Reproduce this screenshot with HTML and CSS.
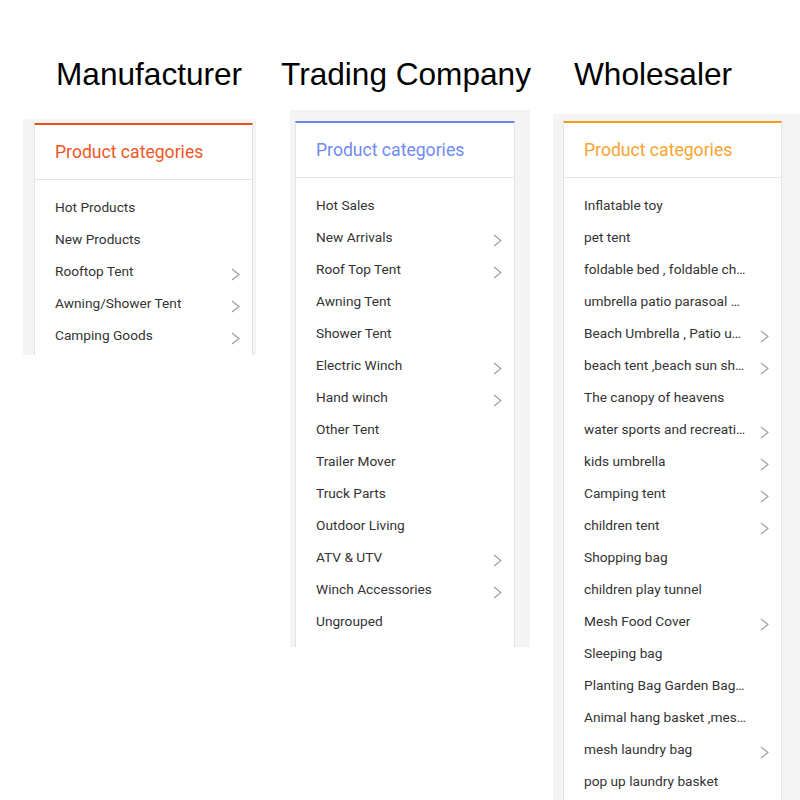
FILE: index.html
```html
<!DOCTYPE html>
<html>
<head>
<meta charset="utf-8">
<link rel="stylesheet" href="styles.css">
</head>
<body>
<div class="titles">
  <h1 class="title">Manufacturer</h1>
  <h1 class="title">Trading Company</h1>
  <h1 class="title">Wholesaler</h1>
</div>
<div class="columns">
  <div class="col col-1">
    <div class="card card-red">
      <div class="card-head">Product categories</div>
      <ul class="list">
        <li class="item"><span class="label">Hot Products</span></li>
        <li class="item"><span class="label">New Products</span></li>
        <li class="item"><span class="label">Rooftop Tent</span><svg class="chev" viewBox="0 0 9 13"><polyline points="1,1 8,6.5 1,12"/></svg></li>
        <li class="item"><span class="label">Awning/Shower Tent</span><svg class="chev" viewBox="0 0 9 13"><polyline points="1,1 8,6.5 1,12"/></svg></li>
        <li class="item"><span class="label">Camping Goods</span><svg class="chev" viewBox="0 0 9 13"><polyline points="1,1 8,6.5 1,12"/></svg></li>
      </ul>
    </div>
  </div>
  <div class="col col-2">
    <div class="card card-blue">
      <div class="card-head">Product categories</div>
      <ul class="list">
        <li class="item"><span class="label">Hot Sales</span></li>
        <li class="item"><span class="label">New Arrivals</span><svg class="chev" viewBox="0 0 9 13"><polyline points="1,1 8,6.5 1,12"/></svg></li>
        <li class="item"><span class="label">Roof Top Tent</span><svg class="chev" viewBox="0 0 9 13"><polyline points="1,1 8,6.5 1,12"/></svg></li>
        <li class="item"><span class="label">Awning Tent</span></li>
        <li class="item"><span class="label">Shower Tent</span></li>
        <li class="item"><span class="label">Electric Winch</span><svg class="chev" viewBox="0 0 9 13"><polyline points="1,1 8,6.5 1,12"/></svg></li>
        <li class="item"><span class="label">Hand winch</span><svg class="chev" viewBox="0 0 9 13"><polyline points="1,1 8,6.5 1,12"/></svg></li>
        <li class="item"><span class="label">Other Tent</span></li>
        <li class="item"><span class="label">Trailer Mover</span></li>
        <li class="item"><span class="label">Truck Parts</span></li>
        <li class="item"><span class="label">Outdoor Living</span></li>
        <li class="item"><span class="label">ATV &amp; UTV</span><svg class="chev" viewBox="0 0 9 13"><polyline points="1,1 8,6.5 1,12"/></svg></li>
        <li class="item"><span class="label">Winch Accessories</span><svg class="chev" viewBox="0 0 9 13"><polyline points="1,1 8,6.5 1,12"/></svg></li>
        <li class="item"><span class="label">Ungrouped</span></li>
      </ul>
    </div>
  </div>
  <div class="col col-3">
    <div class="card card-amber">
      <div class="card-head">Product categories</div>
      <ul class="list">
        <li class="item"><span class="label">Inflatable toy</span></li>
        <li class="item"><span class="label">pet tent</span></li>
        <li class="item"><span class="label">foldable bed , foldable chair</span></li>
        <li class="item"><span class="label">umbrella patio parasoal umbrella</span></li>
        <li class="item"><span class="label">Beach Umbrella , Patio umbrella</span><svg class="chev" viewBox="0 0 9 13"><polyline points="1,1 8,6.5 1,12"/></svg></li>
        <li class="item"><span class="label">beach tent ,beach sun shelter</span><svg class="chev" viewBox="0 0 9 13"><polyline points="1,1 8,6.5 1,12"/></svg></li>
        <li class="item"><span class="label">The canopy of heavens</span></li>
        <li class="item"><span class="label">water sports and recreation</span><svg class="chev" viewBox="0 0 9 13"><polyline points="1,1 8,6.5 1,12"/></svg></li>
        <li class="item"><span class="label">kids umbrella</span><svg class="chev" viewBox="0 0 9 13"><polyline points="1,1 8,6.5 1,12"/></svg></li>
        <li class="item"><span class="label">Camping tent</span><svg class="chev" viewBox="0 0 9 13"><polyline points="1,1 8,6.5 1,12"/></svg></li>
        <li class="item"><span class="label">children tent</span><svg class="chev" viewBox="0 0 9 13"><polyline points="1,1 8,6.5 1,12"/></svg></li>
        <li class="item"><span class="label">Shopping bag</span></li>
        <li class="item"><span class="label">children play tunnel</span></li>
        <li class="item"><span class="label">Mesh Food Cover</span><svg class="chev" viewBox="0 0 9 13"><polyline points="1,1 8,6.5 1,12"/></svg></li>
        <li class="item"><span class="label">Sleeping bag</span></li>
        <li class="item"><span class="label">Planting Bag Garden Bags , Grow Bags</span></li>
        <li class="item"><span class="label">Animal hang basket ,mesh basket</span></li>
        <li class="item"><span class="label">mesh laundry bag</span><svg class="chev" viewBox="0 0 9 13"><polyline points="1,1 8,6.5 1,12"/></svg></li>
        <li class="item"><span class="label">pop up laundry basket</span></li>
      </ul>
    </div>
  </div>
</div>
</body>
</html>
```

FILE: styles.css
```css
html, body {
  margin: 0;
  padding: 0;
  background: #ffffff;
}

body {
  width: 800px;
  height: 800px;
  overflow: hidden;
}

.titles {
  display: grid;
  grid-template-columns: 225px 293px auto;
  padding: 56px 0 0 56px;
  height: 36px;
}

.title {
  margin: 0;
  font-family: "Liberation Sans", Arial, sans-serif;
  font-weight: normal;
  font-size: 31.6px;
  line-height: 36px;
  color: #000;
  white-space: nowrap;
}

.columns {
  display: flex;
  align-items: flex-start;
  padding: 18px 0 0 23px;
}

.col {
  background: #f4f4f4;
  overflow: hidden;
  box-sizing: border-box;
}

.col-1 {
  margin-top: 9px;
  width: 233px;
  height: 236px;
  padding: 4px 3px 0 11px;
}

.col-2 {
  margin-left: 34px;
  width: 240px;
  height: 537px;
  padding: 11px 15px 0 5px;
}

.col-3 {
  margin-top: 4px;
  margin-left: 23px;
  flex: 1;
  height: 800px;
  padding: 7px 18px 0 10px;
}

.card {
  background: #fff;
  border-left: 1px solid #dfe4ec;
  border-right: 1px solid #dfe4ec;
  border-top: 2px solid;
  font-family: Roboto, "Liberation Sans", sans-serif;
}

.card-red { border-top-color: #e8501a; }
.card-blue { border-top-color: #6a86ec; }
.card-amber { border-top-color: #f59c1a; }

.card-head {
  height: 54px;
  line-height: 54px;
  padding-left: 20px;
  font-size: 17.6px;
  border-bottom: 1px solid #e2e6ee;
}

.card-red .card-head { color: #ef5626; }
.card-blue .card-head { color: #6f8bef; }
.card-amber .card-head { color: #f7a430; }

.list {
  list-style: none;
  margin: 0;
  padding: 11px 0 60px 0;
}

.item {
  display: flex;
  align-items: center;
  height: 32px;
  padding: 0 12px 0 20px;
  font-size: 13.7px;
  color: #333;
}

.label {
  max-width: 162px;
  white-space: nowrap;
  overflow: hidden;
  text-overflow: ellipsis;
  line-height: 32px;
}

.chev {
  width: 9px;
  height: 13px;
  margin-left: auto;
  margin-top: 6px;
  fill: none;
  stroke: #9a9a9a;
  stroke-width: 1.1;
}
```
